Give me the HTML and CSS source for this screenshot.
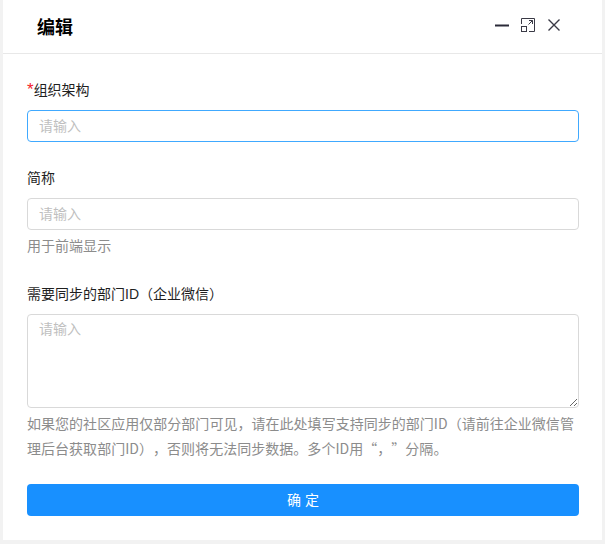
FILE: index.html
```html
<!DOCTYPE html>
<html lang="zh-CN">
<head>
  <meta charset="UTF-8">
  <title>编辑</title>
  <link rel="stylesheet" href="styles.css">
</head>
<body>
  <div class="dialog">
    <header class="dialog-header">
      <span class="dialog-title">编辑</span>
      <div class="dialog-tools">
        <svg width="16" height="16" viewBox="0 0 16 16"><path d="M1 8.500h14" stroke="#2a2a38" stroke-width="2" fill="none"/></svg>
        <svg width="16" height="16" viewBox="0 0 16 16" fill="none" stroke="#3a3a46" stroke-width="1"><path d="M1.500 7V1.500h13v13H9M8.500 7.500l4-4M9 3.500h3.500V7"/><rect x="1.500" y="9.500" width="5" height="5"/></svg>
        <svg width="16" height="16" viewBox="0 0 16 16" fill="none" stroke="#3a3a46" stroke-width="1.400"><path d="M2.500 2.500l11 11M13.500 2.500l-11 11"/></svg>
      </div>
    </header>
    <form class="dialog-body">
      <div class="field">
        <label class="field-label"><span class="required">*</span>组织架构</label>
        <input class="input input-focus" type="text" placeholder="请输入">
      </div>
      <div class="field">
        <label class="field-label">简称</label>
        <input class="input" type="text" placeholder="请输入">
        <p class="hint">用于前端显示</p>
      </div>
      <div class="field field-last">
        <label class="field-label">需要同步的部门ID（企业微信）</label>
        <textarea class="input textarea" placeholder="请输入"></textarea>
        <p class="hint">如果您的社区应用仅部分部门可见，请在此处填写支持同步的部门ID（请前往企业微信管理后台获取部门ID），否则将无法同步数据。多个ID用“，”分隔。</p>
      </div>
      <button class="submit" type="button">确 定</button>
    </form>
  </div>
</body>
</html>
```

FILE: styles.css
```css
* {
  box-sizing: border-box;
}
html, body {
  height: 100%;
}
body {
  margin: 0;
  padding: 0 3px 4px;
  background: #f2f2f2;
  overflow: hidden;
  font-family: "Liberation Sans", "Noto Sans CJK SC", sans-serif;
  font-size: 14px;
  color: #1f1f1f;
  text-spacing-trim: space-all;
}
.dialog {
  height: 540px;
  background: #fff;
}
.dialog-header {
  height: 54px;
  display: flex;
  align-items: center;
  justify-content: space-between;
  padding: 0 40px 2px 34px;
  border-bottom: 1px solid #e8e8e8;
}
.dialog-title {
  font-size: 18px;
  font-weight: bold;
  color: #000;
}
.dialog-tools {
  display: flex;
  gap: 10px;
  margin-top: -1px;
}
.dialog-body {
  padding: 25px 23px 0 24px;
}
.field {
  margin-bottom: 25px;
}
.field-last {
  margin-bottom: 23px;
}
.field-label {
  display: block;
  line-height: 22px;
  margin-bottom: 9px;
}
.required {
  color: #f5222d;
  font-size: 17px;
  line-height: 0;
}
.input {
  display: block;
  width: 100%;
  height: 32px;
  padding: 0 11px;
  border: 1px solid #d9d9d9;
  border-radius: 4px;
  font-family: inherit;
  font-size: 14px;
  outline: none;
}
.input::placeholder {
  color: #bfbfbf;
}
.input-focus {
  border-color: #40a9ff;
}
.textarea {
  height: 94px;
  padding-top: 4px;
  line-height: 20px;
}
.hint {
  margin: 0;
  padding-top: 3px;
  line-height: 25px;
  letter-spacing: 0.03px;
  color: #8c8c8c;
  font-family: "Noto Sans CJK SC", sans-serif;
}
.submit {
  display: block;
  width: 100%;
  height: 32px;
  padding: 0 0 2px;
  border: 0;
  border-radius: 4px;
  background: #1890ff;
  color: #fff;
  font-family: inherit;
  font-size: 14px;
}
```
